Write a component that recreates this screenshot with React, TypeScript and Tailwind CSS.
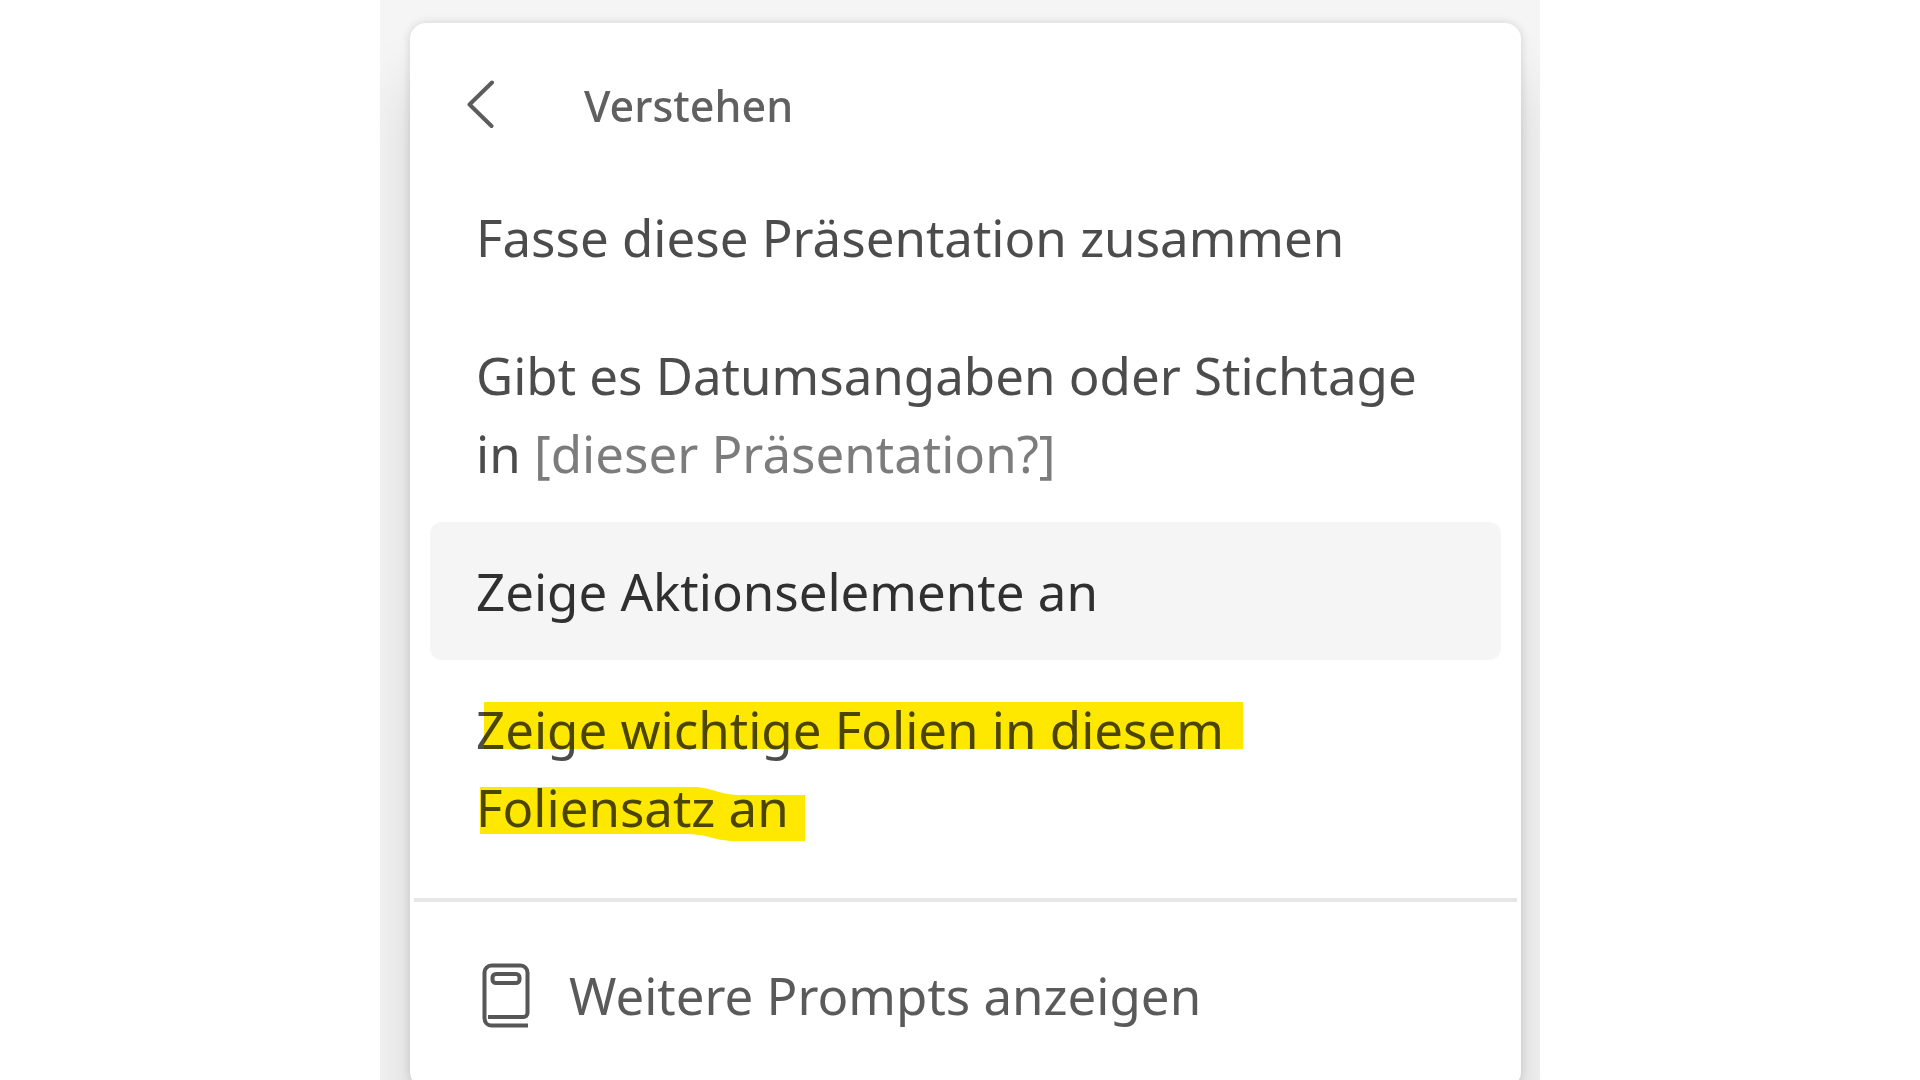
import type { ReactNode } from "react";

function ChevronLeft() {
  return (
    <svg width="28" height="54" viewBox="0 0 28 54" fill="none" stroke="#5c5c5c" strokeWidth="4" strokeLinecap="round" strokeLinejoin="round" aria-hidden="true">
      <path d="M26 3.500 3.500 25.500 25.500 47" />
    </svg>
  );
}

function BookIcon() {
  return (
    <svg width="50" height="66" viewBox="0 0 50 66" fill="none" stroke="#575757" strokeWidth="4" strokeLinejoin="round" aria-hidden="true">
      <path d="M3.5 57V10.500a7 7 0 0 1 7-7h29a7 7 0 0 1 7 7V51a4 4 0 0 1-4 4H7M3.500 56c0 4.500 3 7.500 7 7.500H47" />
      <rect x="11.500" y="12" width="27" height="9" rx="3.500" />
    </svg>
  );
}

function MarkerStrokes() {
  return (
    <svg className="pointer-events-none absolute top-10 left-12 mix-blend-multiply" width="768" height="144" viewBox="0 0 768 144" fill="#ffe800" aria-hidden="true">
      <path d="M6 2H765V49H6Z" />
      <path d="M2 87H214C234 87 240 95 264 95H327V141H258C236 141 230 134 208 134H2Z" />
    </svg>
  );
}

function PromptItem({ children, active = false, marker }: { children: ReactNode; active?: boolean; marker?: ReactNode }) {
  return (
    <li className="relative">
      <button
        type="button"
        className={
          active
            ? "w-full rounded-xl bg-[#f5f5f5] px-[46px] py-[30px] text-left text-[#303030]"
            : "w-full rounded-xl px-[46px] py-[30px] text-left text-[#4c4c4c]"
        }
      >
        {children}
      </button>
      {marker}
    </li>
  );
}

export default function App() {
  return (
    <main className="h-screen overflow-hidden bg-white font-['Noto_Sans','Open_Sans',sans-serif] text-[51px] leading-[78px]">
      <div className="mx-auto h-full max-w-[1160px] overflow-hidden bg-[#f5f5f5] px-[30px] pt-[23px] pr-[19px]">
        <section className="rounded-2xl bg-white shadow-[0_0_10px_rgba(0,0,0,0.14),0_56px_62px_rgba(0,0,0,0.14)]">
          <header className="flex items-center gap-[90px] px-[56px] pt-11 pb-[23px]">
            <button type="button" aria-label="Zurück">
              <ChevronLeft />
            </button>
            <h1 className="text-[43px] font-medium text-[#606060]">Verstehen</h1>
          </header>
          <ul className="px-5 pb-[22px]">
            <PromptItem>Fasse diese Präsentation zusammen</PromptItem>
            <PromptItem>
              Gibt es Datumsangaben oder Stichtage
              <br />
              in <span className="text-[#7c7c7c]">[dieser Präsentation?]</span>
            </PromptItem>
            <PromptItem active>Zeige Aktionselemente an</PromptItem>
            <PromptItem marker={<MarkerStrokes />}>
              Zeige wichtige Folien in diesem
              <br />
              Foliensatz an
            </PromptItem>
          </ul>
          <hr className="mx-1 border-t-4 border-[#e6e6e6]" />
          <footer className="px-[71px] py-[54px]">
            <button type="button" className="flex items-center gap-[38px] text-[#5a5a5a]">
              <BookIcon />
              Weitere Prompts anzeigen
            </button>
          </footer>
        </section>
      </div>
    </main>
  );
}
